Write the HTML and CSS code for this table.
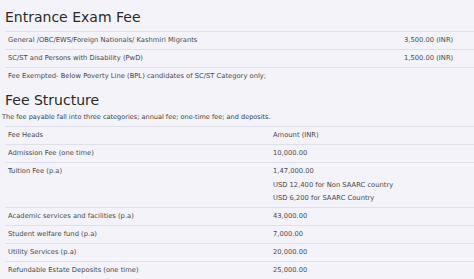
FILE: index.html
```html
<!DOCTYPE html>
<html>
<head>
<meta charset="utf-8">
<link rel="stylesheet" href="styles.css">
</head>
<body>
<div class="page">
  <h2 class="title">Entrance Exam Fee</h2>
  <table class="fees entrance">
    <tr><td class="head">General /OBC/EWS/Foreign Nationals/ Kashmiri Migrants</td><td class="amt">3,500.00 (INR)</td></tr>
    <tr><td class="head">SC/ST and Persons with Disability (PwD)</td><td class="amt">1,500.00 (INR)</td></tr>
    <tr><td class="head" colspan="2">Fee Exempted- Below Poverty Line (BPL) candidates of SC/ST Category only;</td></tr>
  </table>
  <h2 class="title second">Fee Structure</h2>
  <p class="intro">The fee payable fall into three categories; annual fee; one-time fee; and deposits.</p>
  <table class="fees structure">
    <tr><td class="head">Fee Heads</td><td class="amt">Amount (INR)</td></tr>
    <tr><td class="head">Admission Fee (one time)</td><td class="amt">10,000.00</td></tr>
    <tr class="multi"><td class="head">Tuition Fee (p.a)</td><td class="amt"><div>1,47,000.00</div><div class="sub">USD 12,400 for Non SAARC country</div><div class="sub">USD 6,200 for SAARC Country</div></td></tr>
    <tr><td class="head">Academic services and facilities (p.a)</td><td class="amt">43,000.00</td></tr>
    <tr><td class="head">Student welfare fund (p.a)</td><td class="amt">7,000.00</td></tr>
    <tr><td class="head">Utility Services (p.a)</td><td class="amt">20,000.00</td></tr>
    <tr><td class="head">Refundable Estate Deposits (one time)</td><td class="amt">25,000.00</td></tr>
  </table>
</div>
</body>
</html>
```

FILE: styles.css
```css
html, body {
  margin: 0;
  padding: 0;
  background: #f3f3f9;
  overflow: hidden;
}
.page {
  padding: 0 0 0 2px;
  font-family: "DejaVu Sans", sans-serif;
  color: #4a4a4a;
}
.title {
  margin: 0;
  padding: 8px 0 0 3px;
  font-family: "DejaVu Sans", sans-serif;
  font-weight: normal;
  font-size: 14px;
  line-height: 18px;
  color: #2a2a2a;
}
.second {
  padding-top: 6px;
}
.intro {
  margin: 4px 0 0 0;
  font-size: 6.55px;
  line-height: 9px;
  color: #444;
}
.fees {
  border-collapse: collapse;
  width: 480px;
  margin-left: 3px;
  font-size: 6.75px;
}
.entrance {
  margin-top: 5px;
}
.structure {
  margin-top: 4px;
}
.fees td {
  border-top: 1px solid #e0e0e8;
  padding: 4px 3px 4px 3px;
  line-height: 9px;
  vertical-align: top;
  white-space: nowrap;
}
.entrance .head { width: 390px; }
.structure .head { width: 259px; }
.sub { margin-top: 4.5px; }
.multi td { padding-bottom: 4px; }
```
